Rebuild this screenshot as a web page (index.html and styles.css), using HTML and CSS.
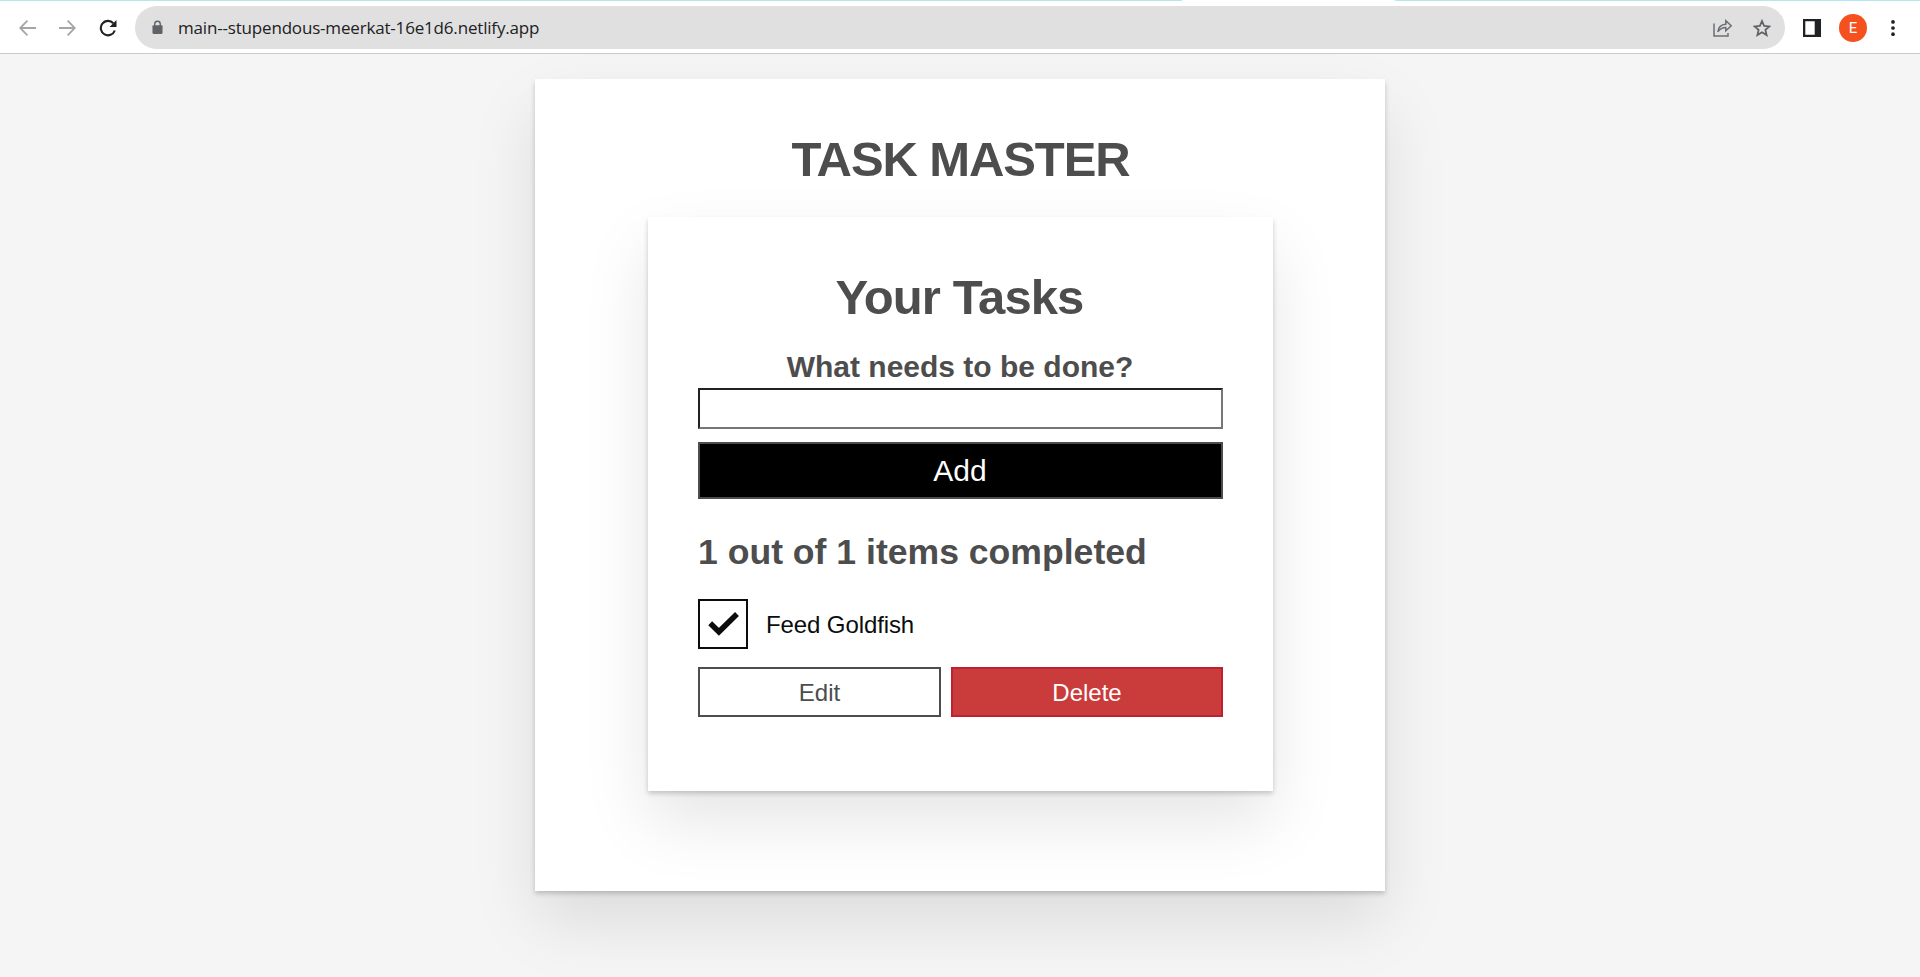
FILE: index.html
```html
<!DOCTYPE html>
<html lang="en">
<head>
<meta charset="utf-8">
<title>Task Master</title>
<link rel="stylesheet" href="styles.css">
</head>
<body>
<header class="toolbar">
  <nav class="nav">
    <svg width="17" height="16" viewBox="0 0 17 16" fill="none" stroke="#a3a5a8" stroke-width="1.800"><path d="M17 8H1.500M8.400 0.700L1.200 8l7.200 7.300"/></svg>
    <svg width="17" height="16" viewBox="0 0 17 16" fill="none" stroke="#a3a5a8" stroke-width="1.800"><path d="M0 8h15.500M8.600 0.700l7.200 7.300-7.200 7.300"/></svg>
    <svg width="18" height="18" viewBox="0 0 18 18"><path d="M15.800 11.500A7.200 7.200 0 1 1 14.300 4.200" fill="none" stroke="#202124" stroke-width="2.100"/><path d="M17.500 1v7h-7z" fill="#202124"/></svg>
  </nav>
  <div class="address">
    <svg class="lock" width="11" height="15" viewBox="0 0 12 15"><rect x="0.500" y="5" width="11" height="9.500" rx="1.200" fill="#5f6368"/><path d="M3 6V3.700a3 3 0 0 1 6 0V6" fill="none" stroke="#5f6368" stroke-width="1.500"/></svg>
    <span class="url">main--stupendous-meerkat-16e1d6.netlify.app</span>
    <svg class="share" width="20" height="18" viewBox="0 0 20 18" fill="none" stroke="#6b6e72" stroke-width="1.500"><path d="M1 4.500v12.600h14v-3"/><path d="M4.800 12.800c.6-4.700 3-7.300 8-7.600V1.700l5.400 5-5.400 5V8.400c-3.500 0-5.700 1.200-8 4.400z"/></svg>
    <svg class="star" width="18" height="18" viewBox="0 0 18 18" fill="none" stroke="#5f6368" stroke-width="1.800"><path d="M9 2l2.100 4.900 5.300.5-4 3.500 1.200 5.200L9 13.300l-4.600 2.800 1.200-5.200-4-3.500 5.300-.5z"/></svg>
  </div>
  <svg class="panel" width="18" height="18" viewBox="0 0 18 18"><path d="M0 0h18v18H0zM2.300 2.300v13.400h9.400V2.300z" fill="#202124" fill-rule="evenodd"/></svg>
  <span class="avatar">E</span>
  <svg class="dots" width="4" height="16" viewBox="0 0 4 16" fill="#202124"><circle cx="2" cy="1.900" r="1.850"/><circle cx="2" cy="8" r="1.850"/><circle cx="2" cy="14.200" r="1.850"/></svg>
</header>
<main class="page">
  <div class="card app">
    <h1 class="title">TASK MASTER</h1>
    <section class="card tasks">
      <h1 class="heading">Your Tasks</h1>
      <label class="prompt" for="new-task">What needs to be done?</label>
      <input class="field" id="new-task" type="text">
      <button class="btn add">Add</button>
      <h2 class="count">1 out of 1 items completed</h2>
      <div class="task">
        <span class="check"><svg width="32" height="26" viewBox="-0.500 0 32 26" fill="none" stroke="#0b0c0c" stroke-width="5.500"><path d="M2.700 12.200l8.700 8.600L29.500 3"/></svg></span>
        <span class="name">Feed Goldfish</span>
      </div>
      <div class="actions">
        <button class="btn edit">Edit</button>
        <button class="btn delete">Delete</button>
      </div>
    </section>
  </div>
</main>
</body>
</html>
```
FILE: styles.css
```css
* { box-sizing: border-box; }
body {
  margin: 0;
  height: 977px;
  overflow: hidden;
  display: flex;
  flex-direction: column;
  background: #f5f5f5;
  color: #4d4d4d;
  font-family: "Liberation Sans", Arial, sans-serif;
}
.toolbar {
  flex: none;
  height: 54px;
  display: flex;
  align-items: center;
  background: linear-gradient(90deg, #b3e5f2 1181px, #fff 1183px, #fff 1394px, #b3e5f2 1396px) 0 0 / 100% 1px no-repeat #fff;
  border-bottom: 1px solid #c8cacb;
  padding: 2px 25px 0 19px;
}
.nav { display: flex; align-items: center; gap: 23px; width: 116px; }
.nav svg { flex: none; }
.address {
  width: 1650px;
  height: 43px;
  border-radius: 22px;
  background: #e0e0e0;
  display: flex;
  align-items: center;
  padding: 0 14px 0 17px;
}
.url {
  margin-left: 15px;
  flex: 1;
  color: #202124;
  font: 17px "Open Sans", "Noto Sans", sans-serif;
  letter-spacing: -.18px;
}
.star { margin-left: 20px; }
.panel { margin-left: 18px; }
.avatar {
  margin-left: 18px;
  width: 28px;
  height: 28px;
  border-radius: 50%;
  background: #f4511e;
  color: #fff;
  font: 15px/29px Roboto, sans-serif;
  text-align: center;
}
.dots { margin-left: auto; }
.page { flex: 1; padding-top: 25px; }
.card {
  background: #fff;
  box-shadow: 0 2.5px 5px rgba(0, 0, 0, .2), 0 31.25px 62.5px rgba(0, 0, 0, .1);
}
.app { width: 850px; height: 812px; margin: 0 auto; padding: 50px 112px 100px 113px; }
.title, .heading {
  margin: 0;
  font-size: 49px;
  line-height: 60px;
  text-align: center;
}
.title { letter-spacing: -1.1px; }
.heading { padding-right: 2px; letter-spacing: -.9px; }
.tasks { margin-top: 28px; height: 574px; padding: 50px; display: flex; flex-direction: column; }
.prompt { margin-top: 21px; padding-right: 1px; font-size: 30px; font-weight: bold; line-height: 38px; text-align: center; }
.field { margin-top: 2px; height: 41px; border: 2px inset #767676; border-radius: 0; padding: 0; background: #fff; }
.btn { border: 2px solid #4d4d4d; border-radius: 0; padding: 2px 0 0; font: 24px "Liberation Sans", Arial, sans-serif; }
.add { margin-top: 13px; height: 57px; padding: 0 1px 0 0; background: #000; color: #fff; font-size: 30px; }
.count { margin: 31px 0 0; font-size: 35.6px; line-height: 45px; }
.task { display: flex; align-items: center; margin-top: 24px; height: 50px; color: #0b0c0c; font-size: 24px; }
.check { width: 50px; height: 50px; border: 2px solid #0b0c0c; display: grid; place-items: center; }
.name { margin-left: 18px; padding-top: 2px; letter-spacing: -.1px; }
.actions { display: flex; gap: 10px; margin-top: 18px; height: 50px; }
.edit { width: 243px; background: #fff; color: #4d4d4d; }
.delete { flex: 1; background: #ca3c3c; border-color: #bd2130; color: #fff; }
```
